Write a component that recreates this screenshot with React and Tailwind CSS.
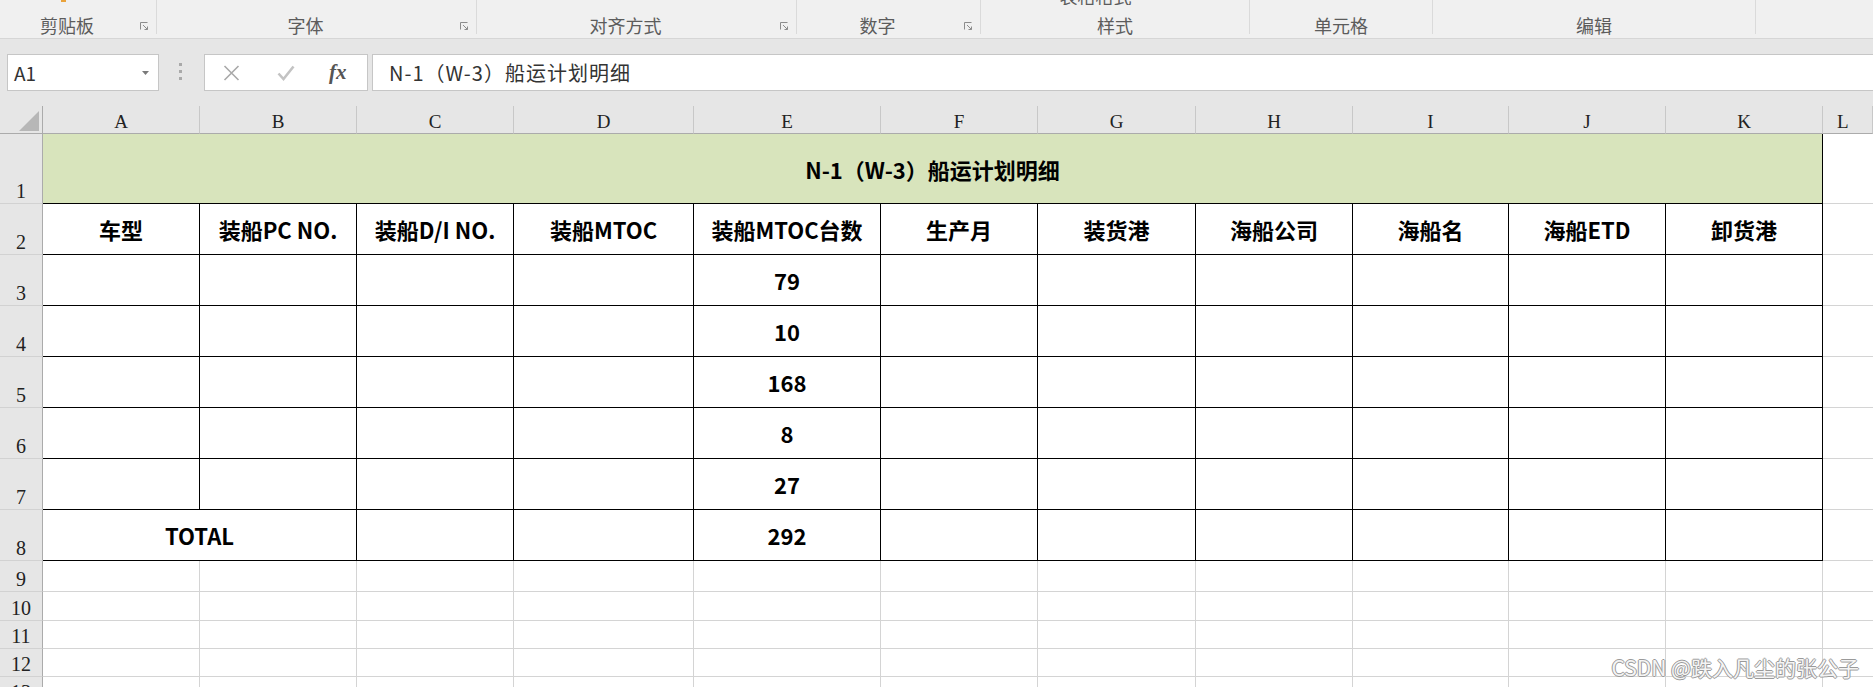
import React from "react";

const cellFont =
  "font-['Liberation_Sans_Narrow','Noto_Sans_CJK_SC',sans-serif] font-bold text-[22px] leading-none text-black";
const blackCell =
  "border-r border-b border-black flex items-center justify-center font-['Liberation_Sans_Narrow','Noto_Sans_CJK_SC',sans-serif] font-bold text-[22px] leading-none text-black whitespace-nowrap";
const grayCell = "border-r border-b border-[#d4d4d4]";
const lCell = "border-b border-[#d4d4d4]";
const colHdr =
  "bg-[#e6e6e6] border-r border-b border-r-[#c8c8c8] border-b-[#ababab] flex items-end justify-center pb-[2px] font-['Liberation_Serif',serif] text-[19px] leading-none text-[#222]";
const rowHdr =
  "bg-[#e6e6e6] border-r border-b border-r-[#ababab] border-b-[#d2d2d2] flex items-end justify-center pb-[2px] font-['Liberation_Serif',serif] text-[20px] leading-none text-[#222]";

function Launcher() {
  return (
    <svg width="9" height="9" viewBox="0 0 9 9" fill="none" stroke="#8c8c8c" strokeWidth="1">
      <path d="M0.5 7.5V0.5H7.5" />
      <path d="M3 3L7.5 7.5M7.5 4.5V7.5H4.5" />
    </svg>
  );
}

function Group({ className, label, launcher, top }) {
  return (
    <div className={className}>
      <div className="h-[16px] flex justify-center">{top}</div>
      <div className="flex-1 flex items-end">
        <div className="flex-1 text-center text-[18px] leading-[18px] text-[#5c5c5c] font-['Noto_Sans_CJK_SC',sans-serif]">
          {label}
        </div>
        {launcher && (
          <div className="w-[22px] pl-[6px] pb-[3px] flex">
            <Launcher />
          </div>
        )}
      </div>
    </div>
  );
}

const COLS = ["A", "B", "C", "D", "E", "F", "G", "H", "I", "J", "K"];
const HEADERS = ["车型", "装船PC NO.", "装船D/I NO.", "装船MTOC", "装船MTOC台数", "生产月", "装货港", "海船公司", "海船名", "海船ETD", "卸货港"];
const VALUES = ["79", "10", "168", "8", "27"];

export default function App() {
  const cells = [];
  // column header row
  cells.push(
    <div key="corner" className="bg-[#e6e6e6] border-r border-b border-r-[#ababab] border-b-[#ababab] flex items-end justify-end pr-[3px] pb-[2px]">
      <svg width="20" height="20" viewBox="0 0 20 20">
        <polygon points="20,0 20,20 0,20" fill="#b7b7b7" />
      </svg>
    </div>
  );
  COLS.forEach((c) =>
    cells.push(
      <div key={"h" + c} className={colHdr}>
        {c}
      </div>
    )
  );
  cells.push(
    <div key="hL" className={colHdr + " justify-start pl-[14px]"}>
      L
    </div>
  );

  // row 1
  cells.push(<div key="r1" className={rowHdr}>1</div>);
  cells.push(
    <div key="title" className={"col-span-11 bg-[#d8e4bc] " + blackCell}>
      N-1（W-3）船运计划明细
    </div>
  );
  cells.push(<div key="r1L" className={lCell} />);

  // row 2
  cells.push(<div key="r2" className={rowHdr}>2</div>);
  HEADERS.forEach((h, i) =>
    cells.push(
      <div key={"hd" + i} className={blackCell}>
        {h}
      </div>
    )
  );
  cells.push(<div key="r2L" className={lCell} />);

  // rows 3-7
  VALUES.forEach((v, r) => {
    cells.push(
      <div key={"rh" + r} className={rowHdr}>
        {r + 3}
      </div>
    );
    COLS.forEach((c, i) =>
      cells.push(
        <div key={"c" + r + c} className={blackCell}>
          {i === 4 ? v : ""}
        </div>
      )
    );
    cells.push(<div key={"cL" + r} className={lCell} />);
  });

  // row 8
  cells.push(<div key="r8" className={rowHdr}>8</div>);
  cells.push(
    <div key="total" className={"col-span-2 " + blackCell}>
      TOTAL
    </div>
  );
  COLS.slice(2).forEach((c, i) =>
    cells.push(
      <div key={"t" + c} className={blackCell}>
        {c === "E" ? "292" : ""}
      </div>
    )
  );
  cells.push(<div key="r8L" className={lCell} />);

  // rows 9-13
  [9, 10, 11, 12, 13].forEach((n) => {
    cells.push(
      <div key={"rh" + n} className={rowHdr}>
        {n}
      </div>
    );
    COLS.forEach((c) => cells.push(<div key={"g" + n + c} className={grayCell} />));
    cells.push(<div key={"gL" + n} className={lCell} />);
  });

  return (
    <div className="w-[1873px] h-[687px] overflow-hidden relative bg-white">
      {/* Ribbon group labels */}
      <div className="h-[39px] bg-[#f0f0f0] border-b border-[#d6d6d6] flex items-start">
        <Group
          className="w-[157px] h-[34px] border-r border-[#dadada] flex flex-col"
          label="剪贴板"
          launcher
          top={<div className="w-[5px] h-[2px] bg-[#e9a23b] mr-[29px]" />}
        />
        <Group className="w-[320px] h-[34px] border-r border-[#dadada] flex flex-col" label="字体" launcher />
        <Group className="w-[320px] h-[34px] border-r border-[#dadada] flex flex-col" label="对齐方式" launcher />
        <Group className="w-[184px] h-[34px] border-r border-[#dadada] flex flex-col" label="数字" launcher />
        <Group
          className="w-[269px] h-[34px] border-r border-[#dadada] flex flex-col"
          label="样式"
          top={
            <div className="h-[5px] overflow-hidden flex items-end justify-center mr-[39px]">
              <span className="text-[18px] leading-[18px] text-[#5c5c5c] font-['Noto_Sans_CJK_SC',sans-serif] whitespace-nowrap">
                表格格式
              </span>
            </div>
          }
        />
        <Group className="w-[183px] h-[34px] border-r border-[#dadada] flex flex-col" label="单元格" />
        <Group className="w-[323px] h-[34px] border-r border-[#dadada] flex flex-col" label="编辑" />
        <div className="flex-1" />
      </div>

      {/* Formula bar */}
      <div className="h-[67px] bg-[#e6e6e6] flex items-start pt-[15px]">
        <div className="ml-[7px] w-[152px] h-[37px] bg-white border border-[#c6c6c6] flex items-center justify-between pl-[6px] pr-[9px] font-['Noto_Sans_CJK_SC',sans-serif] text-[19px] text-[#333]">
          <span className="leading-none">A1</span>
          <svg width="7" height="4" viewBox="0 0 7 4">
            <polygon points="0,0 7,0 3.5,4" fill="#7a7a7a" />
          </svg>
        </div>
        <div className="ml-[20px] mt-[9px] w-[3px] flex flex-col gap-[4px]">
          <div className="h-[3px] bg-[#a9a9a9]" />
          <div className="h-[3px] bg-[#a9a9a9]" />
          <div className="h-[3px] bg-[#a9a9a9]" />
        </div>
        <div className="ml-[22px] w-[164px] h-[37px] bg-white border border-[#c6c6c6] flex items-center pl-[18px]">
          <svg width="17" height="16" viewBox="0 0 17 16" fill="none" stroke="#a9a9a9" strokeWidth="1.6">
            <path d="M1.5 1L15.5 15M15.5 1L1.5 15" />
          </svg>
          <svg className="ml-[37px]" width="18" height="16" viewBox="0 0 18 16" fill="none" stroke="#c3c3c3" strokeWidth="2.6">
            <path d="M1.5 8.5L6.5 14L16.5 1.5" />
          </svg>
          <span className="ml-[34px] font-['Liberation_Serif',serif] italic font-bold text-[21px] leading-none text-[#555]">
            fx
          </span>
        </div>
        <div className="ml-[4px] flex-1 h-[37px] bg-white border-y border-l border-[#c6c6c6] flex items-center pl-[16px] font-['Noto_Sans_CJK_SC',sans-serif] text-[20px] tracking-[1px] text-[#333] whitespace-nowrap">
          N-1（W-3）船运计划明细
        </div>
      </div>

      {/* Sheet grid */}
      <div className="grid grid-cols-[43px_157px_157px_157px_180px_187px_157px_158px_157px_156px_157px_157px_1fr] grid-rows-[28px_70px_51px_51px_51px_51px_51px_51px_51px_31px_29px_28px_28px_28px]">
        {cells}
      </div>

      {/* Watermark */}
      <div className="absolute right-[14px] bottom-[9px] font-['Noto_Sans_CJK_SC',sans-serif] text-[21px] leading-none text-[#f4f4f4] whitespace-nowrap [text-shadow:1px_0_0_#9a9a9a,-1px_0_0_#9a9a9a,0_1px_0_#9a9a9a,0_-1px_0_#9a9a9a]">
        CSDN @跌入凡尘的张公子
      </div>
    </div>
  );
}
